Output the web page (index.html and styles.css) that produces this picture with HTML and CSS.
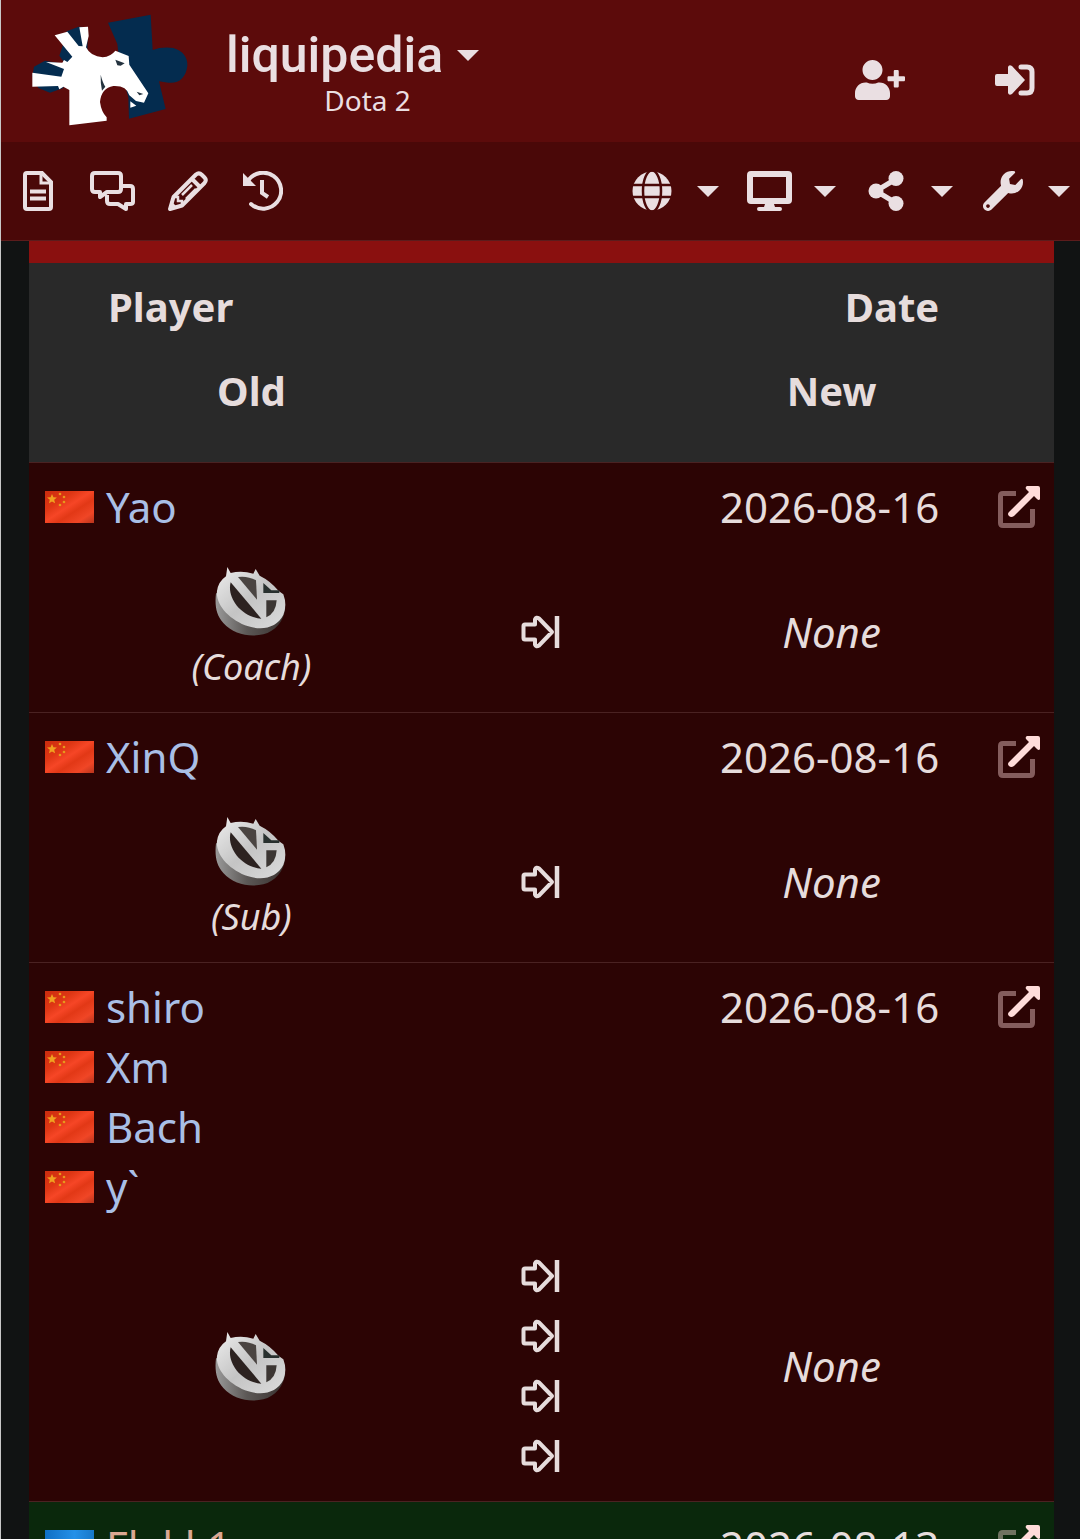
FILE: styles.css
```css
* { box-sizing: border-box; }

body {
  margin: 0;
  background: #111313;
  color: #e6dcdc;
  font: 42px/60px "Noto Sans", "Open Sans", sans-serif;
}

a { color: inherit; text-decoration: none; }

button {
  padding: 0;
  border: 0;
  background: none;
  color: inherit;
  font: inherit;
  cursor: pointer;
}

svg { display: block; flex: none; }

.sprite { position: absolute; width: 0; height: 0; }

.app {
  display: flex;
  flex-direction: column;
  height: 100vh;
  border-left: 1px solid #c8c8c8;
}

.site-header { flex: none; color: #eadfe2; }

.topbar {
  display: flex;
  align-items: flex-start;
  height: 142px;
  padding: 14px 45px 0 29px;
  background: #5c0b0b;
}

.wiki-switch {
  display: flex;
  flex-direction: column;
  margin: 12px 0 0 36px;
}

.wiki-name {
  display: flex;
  align-items: center;
  gap: 14px;
  font: 500 50px/58px Roboto, sans-serif;
}

.wiki-game {
  padding-left: 30px;
  align-self: center;
  font-size: 28px;
  line-height: 32px;
}

.account {
  display: flex;
  align-items: center;
  gap: 90px;
  margin: 46px 0 0 auto;
}

.toolbar {
  display: flex;
  align-items: center;
  justify-content: space-between;
  height: 99px;
  padding: 0 10px 0 14px;
  background: #4a0808;
  border-bottom: 1px solid #5c1c1c;
}

.page-links { display: flex; gap: 29px; }

.page-links a {
  display: flex;
  justify-content: center;
  width: 46px;
}

.menus { display: flex; gap: 27px; }

.menus button { display: flex; align-items: center; gap: 22px; }

.menu-icon {
  display: flex;
  justify-content: center;
  width: 46px;
}

.content {
  flex: 1;
  min-height: 0;
  padding: 0 26px 0 28px;
  overflow-y: auto;
  scrollbar-width: none;
}

.transfers {
  width: 100%;
  table-layout: fixed;
  border-collapse: separate;
  border-spacing: 0;
  border-top: 22px solid #8a100f;
}

.col-old { width: 43.4%; }
.col-arrow { width: 13.2%; }
.col-new { width: 32.2%; }
.col-source { width: 11.2%; }

th, td {
  padding: 14px 0 15px;
  vertical-align: top;
}

thead { background: #292929; }
th { font-size: 40px; font-weight: 700; }
.head-main > * { padding-bottom: 12px; }
.head-teams > * { padding: 12px 0 41px; }
th.head-player { padding-left: 79px; text-align: left; }

.from { background: #2c0404; }
.to { background: #0a280c; }
tbody tr:first-child td { border-top: 1px solid #4a2222; }

.players { padding-left: 16px; color: #a9bfe6; }

.players a {
  display: flex;
  align-items: center;
  gap: 12px;
}

.players .missing { color: #dba792; }

.transfers .date { text-align: right; }

.source a {
  display: flex;
  align-items: center;
  justify-content: flex-end;
  height: 60px;
  padding-right: 13px;
}

.teams td { text-align: center; vertical-align: middle; }
.team { margin: 0 auto; }
.role { display: block; font-size: 36px; }

.arrows svg { margin: 13px auto; }
.arrows svg + svg { margin-top: 26px; }
```

FILE: index.html
```html
<!DOCTYPE html>
<html lang="en">
<head>
<meta charset="utf-8">
<meta name="viewport" content="width=device-width, initial-scale=1">
<title>Liquipedia Dota 2 - Transfers</title>
<link rel="stylesheet" href="styles.css">
</head>
<body>
<svg class="sprite" aria-hidden="true">
  <defs>
    <linearGradient id="flag-red" x1="0" y1="0" x2="1" y2="1">
      <stop offset="0" stop-color="#cc2c0e"/><stop offset=".3" stop-color="#de3614"/><stop offset=".48" stop-color="#f64626"/><stop offset=".62" stop-color="#e23816"/><stop offset=".82" stop-color="#f04626"/><stop offset="1" stop-color="#b8341c"/>
    </linearGradient>
    <linearGradient id="flag-blue" x1="0" y1="0" x2="1" y2="0">
      <stop offset="0" stop-color="#0f6fc4"/><stop offset=".6" stop-color="#2490e8"/><stop offset="1" stop-color="#1878c8"/>
    </linearGradient>
    <linearGradient id="metal-face" x1="0" y1="0" x2="1" y2="1">
      <stop offset="0" stop-color="#eeeeee"/><stop offset=".5" stop-color="#c4c4c4"/><stop offset="1" stop-color="#dcdcdc"/>
    </linearGradient>
    <linearGradient id="metal-side" x1="0" y1="0" x2="1" y2="0">
      <stop offset="0" stop-color="#9a9a9a"/><stop offset=".45" stop-color="#5c5856"/><stop offset="1" stop-color="#38302e"/>
    </linearGradient>
  </defs>
  <symbol id="caret" viewBox="0 0 22 11"><path d="M0 0H22L11 11Z" fill="currentColor"/></symbol>
  <symbol id="china" viewBox="0 0 49 32">
    <rect width="49" height="32" fill="url(#flag-red)"/>
    <path d="M7 3l1.400 3.200 3.500.3-2.700 2.300.9 3.400L7 10.400l-3 1.800.8-3.400L2 6.500l3.600-.3z" fill="#f0a020"/>
    <g fill="#e8981c"><circle cx="15" cy="3" r="1.300"/><circle cx="19" cy="6" r="1.300"/><circle cx="19" cy="11" r="1.300"/><circle cx="15" cy="14" r="1.300"/></g>
  </symbol>
  <symbol id="blue-flag" viewBox="0 0 49 32"><rect width="49" height="32" fill="url(#flag-blue)"/></symbol>
  <symbol id="vici" viewBox="45 33 216 213">
    <path d="M48 115C44 150 48 180 70 204C100 238 150 248 190 238C225 228 252 200 256 158L200 100Z" fill="url(#metal-side)"/>
    <path fill="url(#metal-face)" d="M82 36L92 54Q125 45 160 56L167 42L179 62Q212 78 236 108L250 118Q262 150 250 180C232 216 190 228 145 214C90 196 46 150 51 108Q55 80 78 64Z"/>
    <path d="M92 82C80 125 120 185 184 191Z" fill="#2c2220"/>
    <path d="M114 66L171 134L168 76Q142 62 114 66Z" fill="#4a4441"/>
    <path d="M199 136V187Q228 174 230 136Z" fill="#3c3633"/>
    <path d="M190 84L214 106H238V114H190Z" fill="#28302e"/>
  </symbol>
  <symbol id="leave" viewBox="0 0 40 34">
    <path d="M4 9.500H14V4.500Q15 1.500 18 3.500L31 17L18 30.500Q15 32.500 14 29.500V24.500H4Q2.500 24.500 2.500 23V11Q2.500 9.500 4 9.500Z" fill="none" stroke="currentColor" stroke-width="4" stroke-linejoin="round"/>
    <path d="M36 1V33" stroke="currentColor" stroke-width="4.500"/>
  </symbol>
  <symbol id="source" viewBox="0 0 44 44">
    <path d="M19 8.500H6Q3.500 8.500 3.500 11V38Q3.500 40.500 6 40.500H33Q35.500 40.500 35.500 38V24" fill="none" stroke="#ffd9d9" stroke-opacity=".42" stroke-width="5"/>
    <path d="M30 1H41Q43 1 43 3V14Q42 16 40 14L37 11L17 31Q14 33 12 31T12 27L32 7L29 4Q28 2 30 1Z" fill="#ffdcda"/>
  </symbol>
</svg>

<div class="app">
  <header class="site-header">
    <div class="topbar">
      <a class="logo" href="#" aria-label="Liquipedia home">
        <svg width="160" height="114" viewBox="90 40 480 342">
          <path d="M324 66L452 42L458 148Q485 138 520 142C548 150 564 170 562 196C558 232 535 250 505 246L477 242L497 325L387 354L385 290L360 200L352 130Z" fill="#042c4f"/>
          <path d="M200 92L236 78L264 80L262 145L225 190L190 182L178 165L186 142ZM97 226L102 198L135 180L195 190L190 262L150 276L115 262Z" fill="#042c4f"/>
          <path d="M164 104L202 93L236 136L248 137L238 80L264 78L266 106L258 140Q272 168 308 170Q332 168 346 150L386 166L388 192L445 278L432 306L408 301L388 284Q380 254 340 256Q304 262 300 304Q304 334 320 350V360L208 374V268L190 258L178 266L174 256L97 258V216L184 228L192 205L138 184L187 186L192 178L202 184L217 168Z" fill="#fff"/>
          <path d="M346 177L374 188L362 195L352 194ZM410 273L430 280L418 284ZM302 222Q308 246 316 258L306 270Q301 245 302 222Z" fill="#24333f"/>
          <path d="M391 302L409 315L391 321Z" fill="#fff"/>
        </svg>
      </a>
      <button class="wiki-switch" type="button">
        <span class="wiki-name">liquipedia <svg width="22" height="11"><use href="#caret"/></svg></span>
        <span class="wiki-game">Dota 2</span>
      </button>
      <nav class="account" aria-label="Account">
        <a href="#" aria-label="Create account"><svg width="50" height="40" viewBox="0 0 640 512"><path fill="currentColor" d="M624 208h-64v-64c0-8.800-7.200-16-16-16h-32c-8.800 0-16 7.200-16 16v64h-64c-8.800 0-16 7.200-16 16v32c0 8.800 7.200 16 16 16h64v64c0 8.800 7.200 16 16 16h32c8.800 0 16-7.200 16-16v-64h64c8.800 0 16-7.200 16-16v-32c0-8.800-7.200-16-16-16zm-400 48c70.700 0 128-57.300 128-128S294.700 0 224 0 96 57.300 96 128s57.300 128 128 128zm89.600 32h-16.700c-22.200 10.200-46.900 16-72.900 16s-50.600-5.800-72.900-16h-16.700C60.200 288 0 348.200 0 422.400V464c0 26.500 21.500 48 48 48h352c26.500 0 48-21.500 48-48v-41.600c0-74.200-60.200-134.400-134.400-134.400z"/></svg></a>
        <a href="#" aria-label="Log in"><svg width="40" height="32" viewBox="0 0 40 32"><path fill="currentColor" d="M2 10H13V3Q14 0 17 2L30 16L17 30Q14 32 13 29V22H2Q0 22 0 20V12Q0 10 2 10Z"/><path d="M26 3H32Q37 3 37 8V24Q37 29 32 29H26" fill="none" stroke="currentColor" stroke-width="5" stroke-linecap="round"/></svg></a>
      </nav>
    </div>
    <nav class="toolbar" aria-label="Page tools">
      <div class="page-links">
        <a href="#" aria-label="Page"><svg width="30" height="40" viewBox="0 0 30 40"><path d="M4 2H19L28 11V36Q28 38 26 38H4Q2 38 2 36V4Q2 2 4 2Z" fill="none" stroke="currentColor" stroke-width="4"/><path d="M18 3V12H27" fill="none" stroke="currentColor" stroke-width="3"/><path d="M7 20.500H23M7 27.500H23" stroke="currentColor" stroke-width="4"/></svg></a>
        <a href="#" aria-label="Discussion"><svg width="46" height="40" viewBox="0 0 46 40"><path d="M5 2H28Q31 2 31 5V18Q31 21 28 21H17L10 26V21H5Q2 21 2 18V5Q2 2 5 2Z" fill="none" stroke="currentColor" stroke-width="4" stroke-linejoin="round"/><path d="M33 15H40Q43 15 43 18V31Q43 33 40 33H36V38L28 33H20Q17 33 17 30V24" fill="none" stroke="currentColor" stroke-width="4" stroke-linejoin="round"/></svg></a>
        <a href="#" aria-label="Edit"><svg width="40" height="40" viewBox="0 0 40 40"><path d="M28 3.500Q31 1 34 4L36.500 6.500Q39 9 36.500 12L14 34.500L2 38L5.500 26ZM24 8L32 16" fill="none" stroke="currentColor" stroke-width="4" stroke-linejoin="round"/><path d="M14 24L24 14M18 28L28 18M5.500 26L10 26V30H14V34" fill="none" stroke="currentColor" stroke-width="2.500"/><path d="M2 38L4 31L9 36Z" fill="currentColor"/></svg></a>
        <a href="#" aria-label="History"><svg width="40" height="40" viewBox="0 0 40 40"><path d="M5 10A18 18 0 1 1 8 33" fill="none" stroke="currentColor" stroke-width="4" stroke-linecap="round"/><path d="M0 2V15H13Z" fill="currentColor"/><path d="M19 9V22L25 26" fill="none" stroke="currentColor" stroke-width="4"/></svg></a>
      </div>
      <div class="menus">
        <button type="button" aria-label="Language"><span class="menu-icon"><svg width="40" height="40" viewBox="0 0 40 40"><circle cx="20" cy="20" r="19.500" fill="currentColor"/><g fill="none" stroke="#4a0808" stroke-width="2.500"><ellipse cx="20" cy="20" rx="9" ry="20.500"/><path d="M0 14H40M0 26H40"/></g></svg></span><svg width="22" height="11"><use href="#caret"/></svg></button>
        <button type="button" aria-label="Display"><span class="menu-icon"><svg width="45" height="40" viewBox="0 0 45 40"><path fill="currentColor" fill-rule="evenodd" d="M4 0H41Q45 0 45 4V29Q45 33 41 33H27L28 36H33Q35 36 35 38T33 40H12Q10 40 10 38T12 36H17L18 33H4Q0 33 0 29V4Q0 0 4 0ZM6 6V27H39V6Z"/></svg></span><svg width="22" height="11"><use href="#caret"/></svg></button>
        <button type="button" aria-label="Share"><span class="menu-icon"><svg width="36" height="40" viewBox="0 0 36 40"><path d="M28 8L8 20L28 32" fill="none" stroke="currentColor" stroke-width="5"/><g fill="currentColor"><circle cx="28" cy="7.500" r="7.500"/><circle cx="8" cy="20" r="7.500"/><circle cx="28" cy="32.500" r="7.500"/></g></svg></span><svg width="22" height="11"><use href="#caret"/></svg></button>
        <button type="button" aria-label="Tools"><span class="menu-icon"><svg width="40" height="40" viewBox="0 0 512 512"><path fill="currentColor" d="M507.700 109.100c-2.200-9-13.500-12.100-20.100-5.500l-74.400 74.400-67.900-11.300L334 98.900l74.400-74.400c6.600-6.600 3.400-17.900-5.700-20.200-47.400-11.700-99.600.9-136.600 37.900-39.600 39.600-50.500 97.100-34.100 147.200L18.700 402.800c-25 25-25 65.500 0 90.500 25 25 65.500 25 90.500 0l213.200-213.200c50.100 16.700 107.500 5.700 147.400-34.200 37.100-37.100 49.700-89.300 37.900-136.800zM64 472c-13.300 0-24-10.700-24-24 0-13.300 10.700-24 24-24s24 10.700 24 24c0 13.300-10.700 24-24 24z"/></svg></span><svg width="22" height="11"><use href="#caret"/></svg></button>
      </div>
    </nav>
  </header>

  <main class="content">
    <table class="transfers">
      <colgroup><col class="col-old"><col class="col-arrow"><col class="col-new"><col class="col-source"></colgroup>
      <thead>
        <tr class="head-main"><th class="head-player" colspan="2" scope="col">Player</th><th class="date" scope="col">Date</th><td></td></tr>
        <tr class="head-teams"><th scope="col">Old</th><td></td><th colspan="2" scope="col">New</th></tr>
      </thead>
      <tbody class="from">
        <tr><td class="players" colspan="2"><a href="#"><svg width="49" height="32"><use href="#china"/></svg>Yao</a></td><td class="date">2026-08-16</td><td class="source"><a href="#" aria-label="Source"><svg width="44" height="44"><use href="#source"/></svg></a></td></tr>
        <tr class="teams"><td><svg class="team" width="72" height="71" role="img" aria-label="Vici Gaming"><use href="#vici"/></svg><i class="role">(Coach)</i></td><td class="arrows"><svg width="40" height="34"><use href="#leave"/></svg></td><td colspan="2"><i>None</i></td></tr>
      </tbody>
      <tbody class="from">
        <tr><td class="players" colspan="2"><a href="#"><svg width="49" height="32"><use href="#china"/></svg>XinQ</a></td><td class="date">2026-08-16</td><td class="source"><a href="#" aria-label="Source"><svg width="44" height="44"><use href="#source"/></svg></a></td></tr>
        <tr class="teams"><td><svg class="team" width="72" height="71" role="img" aria-label="Vici Gaming"><use href="#vici"/></svg><i class="role">(Sub)</i></td><td class="arrows"><svg width="40" height="34"><use href="#leave"/></svg></td><td colspan="2"><i>None</i></td></tr>
      </tbody>
      <tbody class="from">
        <tr><td class="players" colspan="2"><a href="#"><svg width="49" height="32"><use href="#china"/></svg>shiro</a><a href="#"><svg width="49" height="32"><use href="#china"/></svg>Xm</a><a href="#"><svg width="49" height="32"><use href="#china"/></svg>Bach</a><a href="#"><svg width="49" height="32"><use href="#china"/></svg>y`</a></td><td class="date">2026-08-16</td><td class="source"><a href="#" aria-label="Source"><svg width="44" height="44"><use href="#source"/></svg></a></td></tr>
        <tr class="teams"><td><svg class="team" width="72" height="71" role="img" aria-label="Vici Gaming"><use href="#vici"/></svg></td><td class="arrows"><svg width="40" height="34"><use href="#leave"/></svg><svg width="40" height="34"><use href="#leave"/></svg><svg width="40" height="34"><use href="#leave"/></svg><svg width="40" height="34"><use href="#leave"/></svg></td><td colspan="2"><i>None</i></td></tr>
      </tbody>
      <tbody class="to">
        <tr><td class="players" colspan="2"><a class="missing" href="#"><svg width="49" height="32"><use href="#blue-flag"/></svg>Flekk1</a></td><td class="date">2026-08-13</td><td class="source"><a href="#" aria-label="Source"><svg width="44" height="44"><use href="#source"/></svg></a></td></tr>
      </tbody>
    </table>
  </main>
</div>
</body>
</html>
```
